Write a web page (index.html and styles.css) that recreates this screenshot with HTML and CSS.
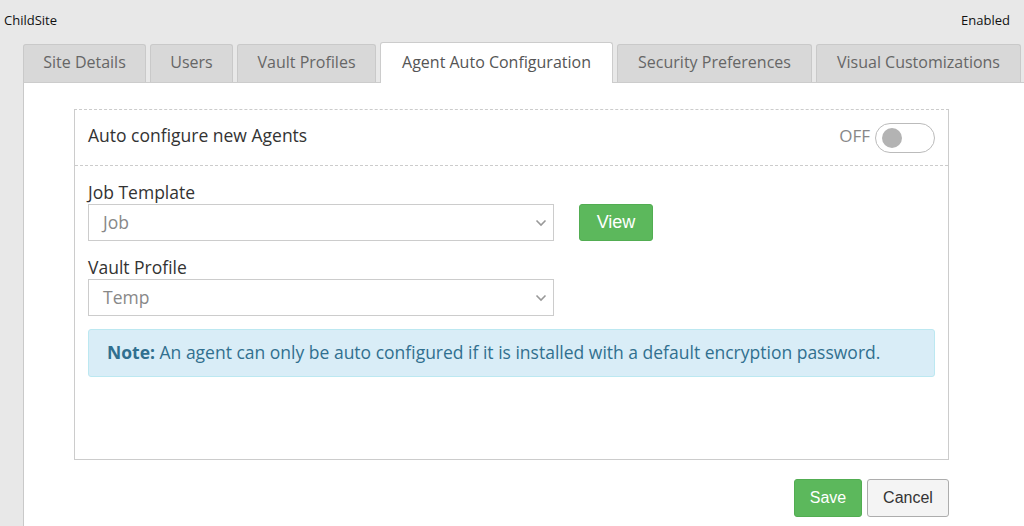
FILE: index.html
```html
<!DOCTYPE html>
<html>
<head>
<meta charset="utf-8">
<link rel="stylesheet" href="styles.css">
</head>
<body>
<div class="topbar">
  <span>ChildSite</span>
  <span>Enabled</span>
</div>
<div class="tabs">
  <div class="tab t1">Site Details</div>
  <div class="tab t2">Users</div>
  <div class="tab t3">Vault Profiles</div>
  <div class="tab active t4">Agent Auto Configuration</div>
  <div class="tab t5">Security Preferences</div>
  <div class="tab t6">Visual Customizations</div>
</div>
<div class="panel">
  <div class="box">
    <div class="box-head">
      <span class="head-title">Auto configure new Agents</span>
      <div class="toggle-wrap">
        <span class="off">OFF</span>
        <span class="toggle"><span class="knob"></span></span>
      </div>
    </div>
    <div class="box-body">
      <div class="label">Job Template</div>
      <div class="row first">
        <div class="select"><span>Job</span>
          <svg class="chev" width="12" height="8" viewBox="0 0 12 8"><path d="M1.5 1.5 L6 6 L10.5 1.5" fill="none" stroke="#999" stroke-width="1.6"/></svg>
        </div>
        <button class="btn green view">View</button>
      </div>
      <div class="label">Vault Profile</div>
      <div class="row">
        <div class="select"><span>Temp</span>
          <svg class="chev" width="12" height="8" viewBox="0 0 12 8"><path d="M1.5 1.5 L6 6 L10.5 1.5" fill="none" stroke="#999" stroke-width="1.6"/></svg>
        </div>
      </div>
      <div class="note"><b>Note:</b> An agent can only be auto configured if it is installed with a default encryption password.</div>
    </div>
  </div>
  <div class="actions">
    <button class="btn green save">Save</button>
    <button class="btn cancel">Cancel</button>
  </div>
</div>
</body>
</html>
```

FILE: styles.css
```css
html, body {
  margin: 0;
  padding: 0;
}
body {
  background: #e8e8e8;
  font-family: "Open Sans", sans-serif;
  color: #333;
  width: 1024px;
  height: 526px;
  overflow: hidden;
  display: flex;
  flex-direction: column;
}
.topbar {
  display: flex;
  justify-content: space-between;
  font-size: 13px;
  color: #111;
  padding: 10px 14px 0 4px;
  line-height: 20px;
  box-sizing: border-box;
  height: 42px;
  flex: none;
}
.tabs {
  display: flex;
  align-items: flex-end;
  gap: 4px;
  margin-left: 23px;
  height: 40px;
  flex: none;
}
.tab {
  box-sizing: border-box;
  height: 38px;
  background: #d8d8d8;
  border: 1px solid #c9c9c9;
  border-bottom: none;
  border-radius: 3px 3px 0 0;
  color: #666;
  font-size: 16px;
  line-height: 35px;
  text-align: center;
}
.t1 { width: 123px; }
.t2 { width: 83px; }
.t3 { width: 139px; }
.t4 { width: 233px; }
.t5 { width: 195px; }
.t6 { width: 205px; }
.tab.active {
  height: 41px;
  line-height: 38px;
  background: #fff;
  border-color: #ccc;
  color: #555;
  margin-bottom: -1px;
  position: relative;
}
.panel {
  flex: 1;
  background: #fff;
  margin-left: 23px;
  border-left: 1px solid #c9c9c9;
  border-top: 1px solid #ccc;
  padding: 26px 75px 0 50px;
}
.box {
  border: 1px solid #ccc;
  border-top: 1px dashed #ccc;
  height: 349px;
}
.box-head {
  display: flex;
  justify-content: space-between;
  align-items: center;
  height: 55px;
  border-bottom: 1px dashed #ccc;
  padding: 0 13px 0 13px;
}
.head-title {
  font-size: 17.5px;
  color: #333;
  margin-bottom: 5px;
}
.toggle-wrap {
  display: flex;
  align-items: center;
  gap: 5px;
}
.off {
  font-size: 17px;
  color: #888;
  margin-bottom: 4px;
}
.toggle {
  box-sizing: border-box;
  width: 60px;
  height: 30px;
  border: 1px solid #bbb;
  border-radius: 15px;
  display: flex;
  align-items: center;
  padding-left: 6px;
}
.knob {
  width: 20px;
  height: 20px;
  border-radius: 50%;
  background: #b3b3b3;
}
.box-body {
  padding: 14px 13px 0 13px;
}
.label {
  font-size: 17.5px;
  line-height: 24px;
  color: #333;
}
.row {
  display: flex;
  align-items: center;
  gap: 25px;
  margin-bottom: 13px;
}
.row.first {
  margin-bottom: 14px;
}
.select {
  box-sizing: border-box;
  width: 466px;
  height: 37px;
  border: 1px solid #ccc;
  display: flex;
  align-items: center;
  justify-content: space-between;
  padding: 0 6px 1px 14px;
  font-size: 17.5px;
  color: #888;
}
.chev {
  margin-top: 2px;
}
.btn {
  box-sizing: border-box;
  height: 38px;
  border-radius: 3px;
  font-family: "Liberation Sans", Arial, sans-serif;
  font-size: 16px;
  cursor: pointer;
}
.green {
  background: #5cb85c;
  border: 1px solid #52ad52;
  color: #fff;
}
.view {
  width: 74px;
  height: 37px;
  font-size: 18px;
}
.note {
  box-sizing: border-box;
  height: 48px;
  background: #d9edf7;
  border: 1px solid #bce8f1;
  border-radius: 3px;
  color: #31708f;
  font-size: 17.5px;
  line-height: 44px;
  padding-left: 18px;
}
.note b {
  font-weight: 700;
}
.actions {
  display: flex;
  justify-content: flex-end;
  gap: 5px;
  margin-top: 19px;
}
.save {
  width: 68px;
}
.cancel {
  width: 82px;
  background: #f4f4f4;
  border: 1px solid #adadad;
  color: #333;
}
```
